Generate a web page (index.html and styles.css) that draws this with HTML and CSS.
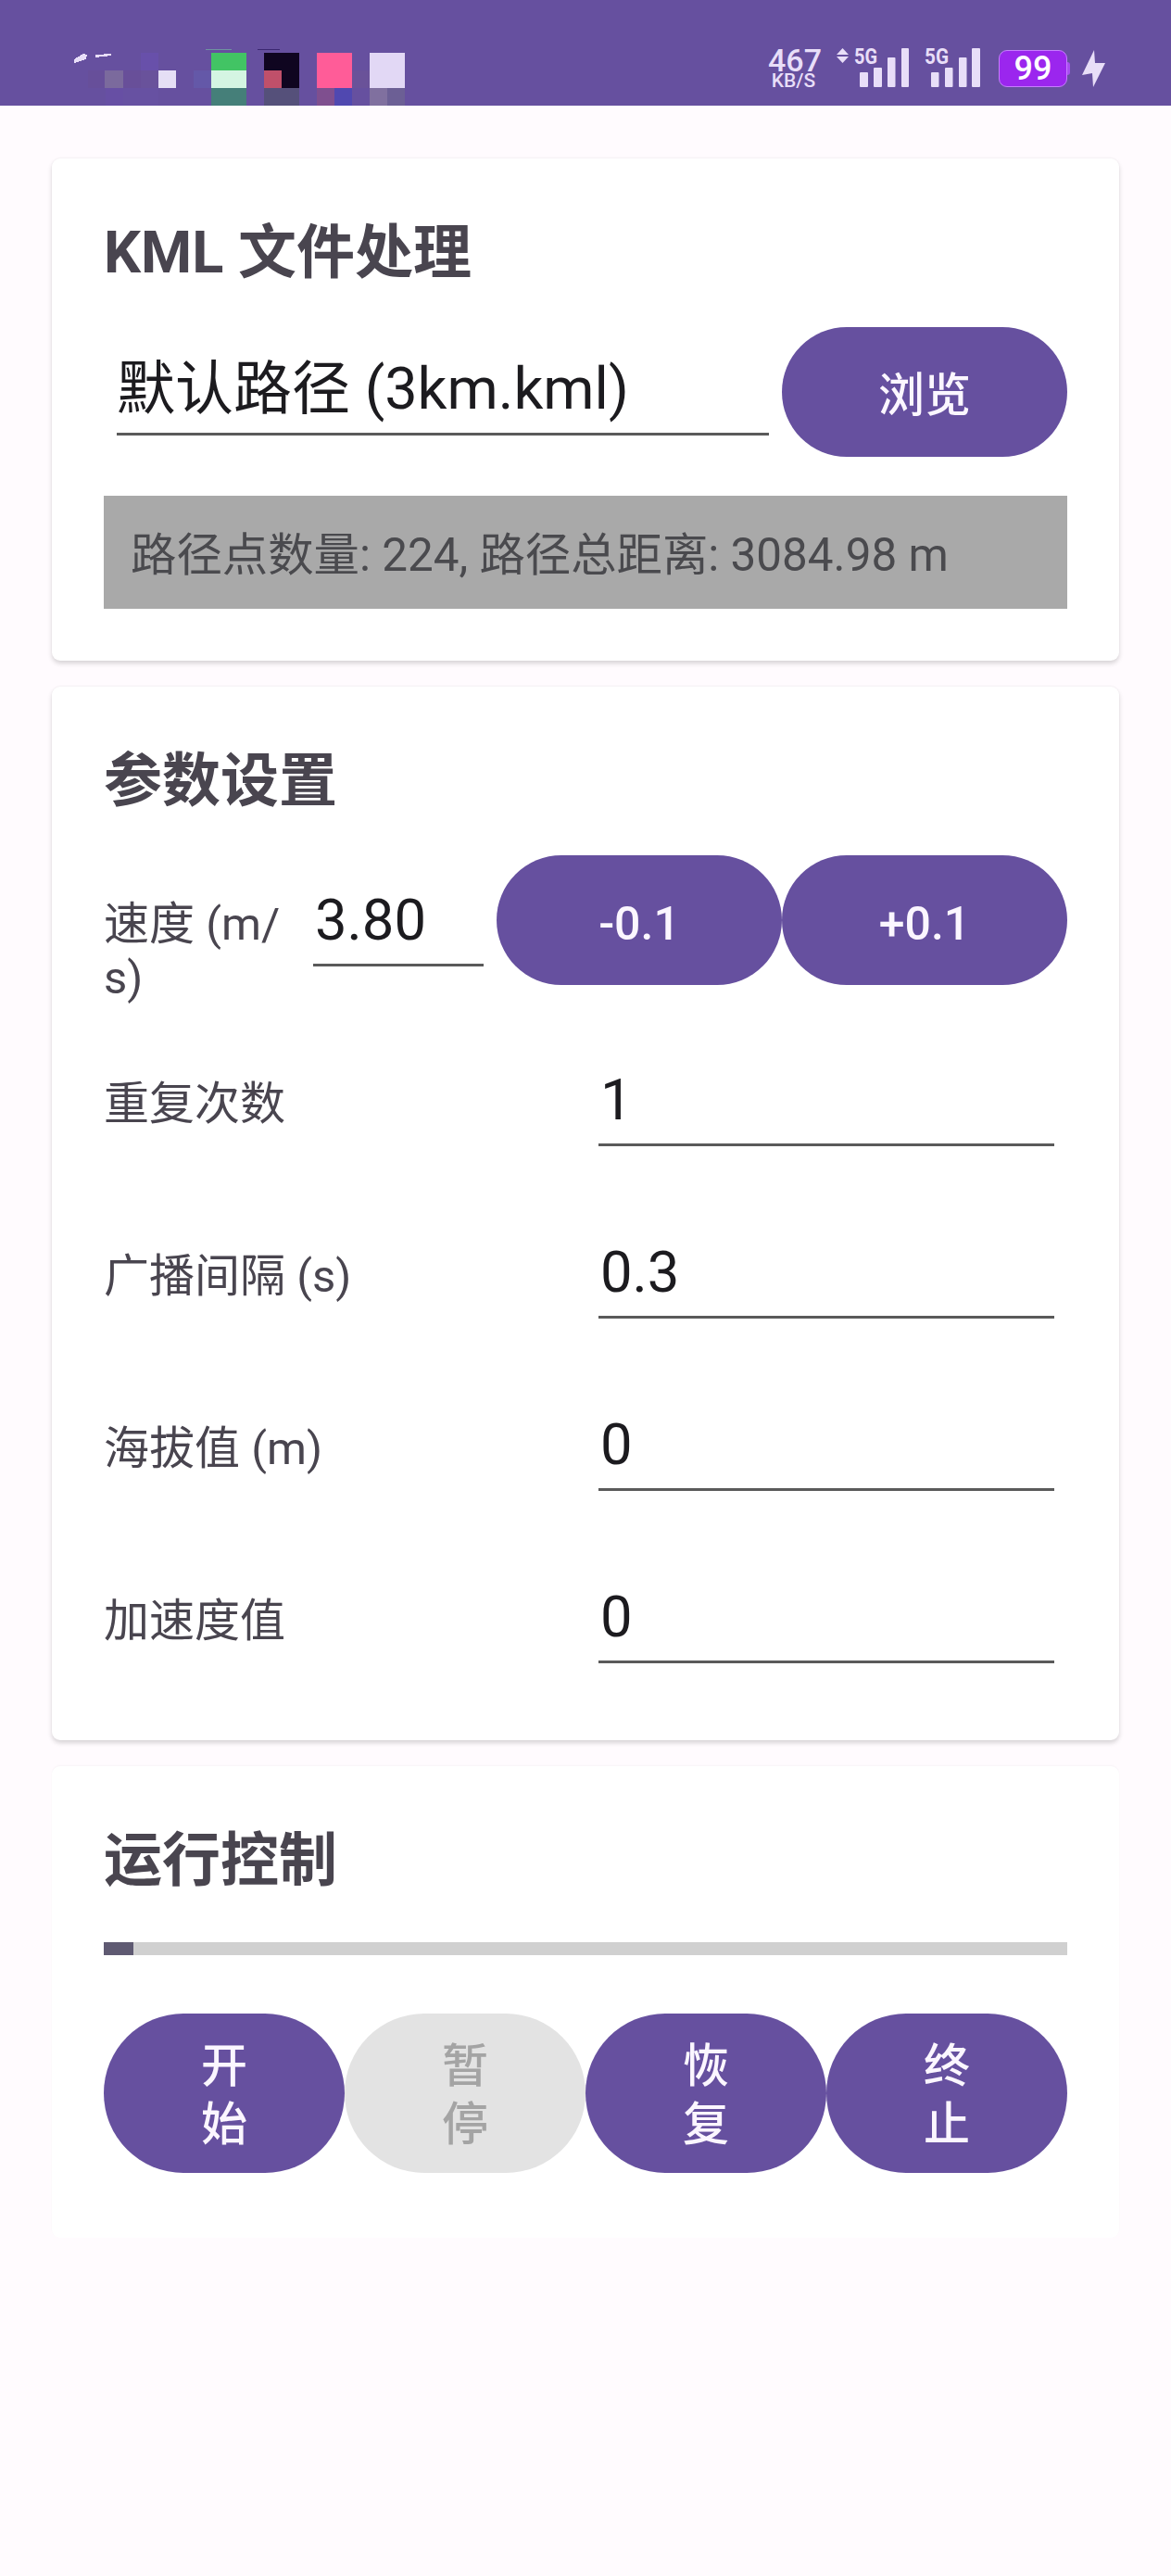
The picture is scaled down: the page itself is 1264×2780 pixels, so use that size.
FILE: index.html
```html
<!DOCTYPE html>
<html lang="en">

<head>
    <meta charset="UTF-8">
    <meta name="viewport" content="width=device-width, initial-scale=1.0">
    <title>KML 文件处理</title>
    <link rel="stylesheet" href="styles.css">
</head>

<body>
    <div class="status-bar">
        <!-- blurred notification icons -->
        <svg class="status-mosaic" width="440" height="114" viewBox="0 0 440 114">
            <polygon points="80,64 90,58 94,59 93,64 80,68" fill="#e8def8" />
            <polygon points="103,59 120,58 120,60 103,62" fill="#e8def8" />
            <rect x="95" y="76" width="18" height="19" fill="#674f9a" />
            <rect x="113" y="76" width="20" height="19" fill="#7b6a9d" />
            <rect x="133" y="76" width="19" height="19" fill="#684f99" />
            <rect x="152" y="57" width="19" height="19" fill="#6850aa" />
            <rect x="152" y="76" width="19" height="19" fill="#69529b" />
            <rect x="171" y="76" width="19" height="19" fill="#e5dff5" />
            <rect x="114" y="95" width="19" height="19" fill="#674fa4" />
            <rect x="133" y="95" width="38" height="19" fill="#6751a2" />
            <rect x="209" y="76" width="19" height="19" fill="#6458a8" />
            <ellipse cx="236" cy="53.5" rx="14" ry="1" fill="#6f93a0" />
            <rect x="228" y="57" width="38" height="19" fill="#42c464" />
            <rect x="228" y="76" width="38" height="19" fill="#d4f5e2" />
            <rect x="228" y="95" width="38" height="19" fill="#457f79" />
            <rect x="278" y="53" width="24" height="1" fill="#3a2670" />
            <rect x="285" y="57" width="38" height="38" fill="#0f0520" />
            <rect x="285" y="76" width="19" height="19" fill="#c0506a" />
            <rect x="285" y="95" width="38" height="19" fill="#55507a" />
            <rect x="342" y="57" width="38" height="38" fill="#ff5c98" />
            <rect x="342" y="95" width="19" height="19" fill="#7f4f8f" />
            <rect x="361" y="95" width="19" height="19" fill="#5048b0" />
            <rect x="380" y="76" width="19" height="19" fill="#6a5299" />
            <rect x="399" y="57" width="38" height="38" fill="#e2d8f5" />
            <rect x="399" y="95" width="19" height="19" fill="#80709f" />
            <rect x="418" y="95" width="19" height="19" fill="#6c5f95" />
        </svg>
        <div class="status-icons">
            <div class="net-speed">467<br>KB/S</div>
            <svg class="data-arrows" width="13" height="16" viewBox="0 0 13 16">
                <polygon points="0,7 6.5,0 13,7" />
                <polygon points="0,9 13,9 6.5,16" />
            </svg>
            <svg class="signal" width="59" height="44" viewBox="0 0 59 44">
                <text x="0" y="17" textLength="25" lengthAdjust="spacingAndGlyphs">5G</text>
                <rect x="6" y="26" width="9" height="16" rx="1" />
                <rect x="21" y="21" width="9" height="21" rx="1" />
                <rect x="36" y="10" width="8.5" height="32" rx="1" />
                <rect x="51" y="0" width="8" height="42" rx="1" />
            </svg>
            <svg class="signal" width="60" height="44" viewBox="0 0 60 44">
                <text x="0" y="17" textLength="26" lengthAdjust="spacingAndGlyphs">5G</text>
                <rect x="7" y="26" width="8.5" height="16" rx="1" />
                <rect x="22" y="21" width="8.5" height="21" rx="1" />
                <rect x="37" y="10" width="8.5" height="32" rx="1" />
                <rect x="51" y="0" width="9" height="42" rx="1" />
            </svg>
            <div class="battery">99</div>
            <svg class="bolt" width="25" height="40" viewBox="0 0 25 40">
                <polygon points="13,0 0,27 11,25 12,40 25,14 14,14" />
            </svg>
        </div>
    </div>

    <div class="content">
        <div class="card">
            <h2 class="card-title">KML 文件处理</h2>
            <div class="file-row">
                <div class="field field-file">默认路径 (3km.kml)</div>
                <button class="btn">浏览</button>
            </div>
            <div class="path-info">路径点数量: 224, 路径总距离: 3084.98 m</div>
        </div>

        <div class="card">
            <h2 class="card-title">参数设置</h2>
            <div class="speed-row">
                <label class="param-label speed-label">速度 (m/<br>s)</label>
                <div class="field field-speed">3.80</div>
                <button class="btn">-0.1</button>
                <button class="btn">+0.1</button>
            </div>
            <div class="param-row">
                <label class="param-label">重复次数</label>
                <div class="field">1</div>
            </div>
            <div class="param-row">
                <label class="param-label">广播间隔 (s)</label>
                <div class="field">0.3</div>
            </div>
            <div class="param-row">
                <label class="param-label">海拔值 (m)</label>
                <div class="field">0</div>
            </div>
            <div class="param-row">
                <label class="param-label">加速度值</label>
                <div class="field">0</div>
            </div>
        </div>

        <div class="card card-flat">
            <h2 class="card-title">运行控制</h2>
            <div class="progress">
                <div class="progress-fill" style="width: 32px"></div>
            </div>
            <div class="control-row">
                <button class="btn btn-tall">开始</button>
                <button class="btn btn-tall btn-disabled">暂停</button>
                <button class="btn btn-tall">恢复</button>
                <button class="btn btn-tall">终止</button>
            </div>
        </div>
    </div>
</body>

</html>
```

FILE: styles.css
```css
body {
    margin: 0;
    min-height: 2780px;
    background-color: #fffbfe;
    font-family: Roboto, "Noto Sans CJK SC", sans-serif;
    color: #49454f;
}

/* status bar */
.status-bar {
    display: flex;
    justify-content: space-between;
    height: 114px;
    padding-right: 71px;
    background-color: #66509f;
}

.status-mosaic {
    display: block;
    shape-rendering: crispEdges;
}

.status-icons {
    display: flex;
    align-items: center;
    height: 44px;
    margin-top: 52px;
    color: #e8def8;
    fill: #e8def8;
}

.net-speed {
    width: 55px;
    margin-right: 19px;
    font-size: 21px;
    font-weight: 500;
    line-height: 17px;
    text-align: center;
}

.net-speed::first-line {
    font-size: 34px;
    line-height: 27px;
}

.data-arrows {
    align-self: flex-start;
    margin-right: 6px;
}

.signal {
    margin-right: 17px;
    overflow: visible;
}

.signal text {
    font-size: 24px;
    font-weight: 700;
}

.battery {
    position: relative;
    box-sizing: border-box;
    width: 74px;
    height: 40px;
    margin-left: 3px;
    margin-right: 16px;
    border: 1px solid #c77dff;
    border-radius: 9px;
    background-color: #9b26ee;
    color: #fff;
    font-size: 36px;
    font-weight: 500;
    line-height: 39px;
    text-align: center;
}

.battery::after {
    content: "";
    position: absolute;
    top: 12px;
    right: -4px;
    width: 3px;
    height: 14px;
    border-radius: 0 3px 3px 0;
    background-color: #a94df0;
}

/* cards */
.content {
    padding: 57px 56px 0;
}

.card {
    margin-bottom: 28px;
    padding: 56px;
    border-radius: 9px;
    background-color: #fff;
    box-shadow: 0 3px 5px rgba(0, 0, 0, 0.16), 0 -1px 2px rgba(0, 0, 0, 0.03);
}

.card-flat {
    padding-bottom: 70px;
    box-shadow: 0 -1px 2px rgba(0, 0, 0, 0.03);
}

.card-title {
    height: 84px;
    margin: 0 0 42px;
    font-size: 63px;
    font-weight: 700;
    line-height: 92px;
}

.card-flat .card-title {
    margin-bottom: 50px;
}

.field {
    flex: 1;
    box-sizing: border-box;
    height: 86px;
    margin: 0 14px;
    padding: 0 0 11px;
    border-bottom: 3px solid #5a5a5a;
    color: #1c1b1f;
    font-size: 61.6px;
    line-height: 72px;
    white-space: nowrap;
}

.btn {
    display: flex;
    align-items: center;
    justify-content: center;
    flex: none;
    box-sizing: border-box;
    width: 308px;
    height: 140px;
    padding: 7px 0 0;
    border: none;
    border-radius: 70px;
    background-color: #66509f;
    color: #fbf6ff;
    font-family: inherit;
    font-size: 50px;
    font-weight: 500;
    line-height: 58px;
}

.btn-tall {
    flex: 1;
    width: auto;
    height: 172px;
    padding: 5px 84px 0;
    border-radius: 86px;
    line-height: 63px;
}

.btn-disabled {
    background-color: #e3e3e3;
    color: #a4a4a4;
}

/* KML row */
.file-row {
    display: flex;
    align-items: flex-start;
}

.field-file {
    margin-top: 31px;
    font-size: 63px;
}

.path-info {
    box-sizing: border-box;
    height: 122px;
    margin-top: 42px;
    padding: 35px 0 0 29px;
    background-color: #a9a9a9;
    color: #4a4a4e;
    font-size: 49.4px;
    line-height: 58px;
}

/* parameters */
.param-label {
    flex: none;
    width: 520px;
    font-size: 49px;
    line-height: 58px;
}

.speed-row {
    display: flex;
    align-items: baseline;
    height: 155px;
}

.speed-label {
    width: 212px;
}

.field-speed {
    flex: none;
    width: 184px;
    padding-left: 2px;
}

.param-row {
    display: flex;
    align-items: baseline;
    box-sizing: border-box;
    height: 186px;
    padding-top: 73px;
}

.param-row .field {
    flex: 1;
    padding-left: 2px;
    margin-left: 14px;
}

/* run control */
.progress {
    height: 14px;
    margin-bottom: 63px;
    background-color: #d0d0d0;
}

.progress-fill {
    height: 100%;
    background-color: #5f5a72;
}

.control-row {
    display: flex;
}
```
